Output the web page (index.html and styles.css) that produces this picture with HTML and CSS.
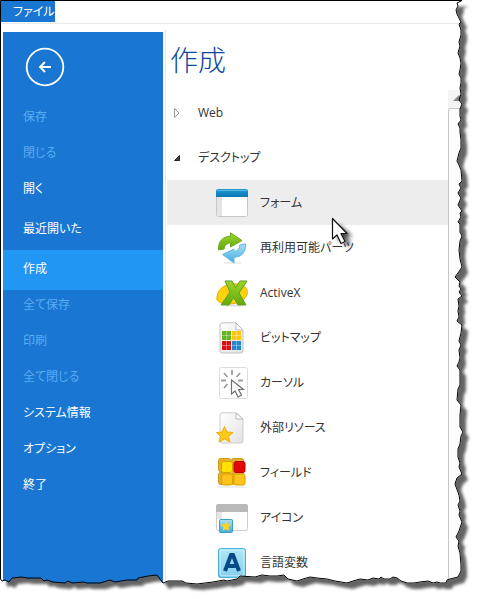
FILE: index.html
```html
<!DOCTYPE html>
<html lang="ja">
<head>
<meta charset="utf-8">
<meta name="viewport" content="width=device-width, initial-scale=1">
<title>作成</title>
<link rel="stylesheet" href="styles.css">
</head>
<body>
<div class="window">
  <header class="tabs"><button class="tab" type="button">ファイル</button></header>
  <div class="body">
    <nav class="side">
      <button class="back" type="button" aria-label="戻る">
        <svg viewBox="0 0 40 40" width="40" height="40"><circle cx="20" cy="20" r="18.3" fill="none" stroke="#fff" stroke-width="1.8"/><path d="M26 20H15M20 15l-5 5 5 5" fill="none" stroke="#fff" stroke-width="1.9"/></svg>
      </button>
      <button class="item" type="button" disabled>保存</button>
      <button class="item" type="button" disabled>閉じる</button>
      <button class="item tall" type="button">開く</button>
      <button class="item tall" type="button">最近開いた</button>
      <button class="item tall current" type="button">作成</button>
      <button class="item" type="button" disabled>全て保存</button>
      <button class="item" type="button" disabled>印刷</button>
      <button class="item" type="button" disabled>全て閉じる</button>
      <button class="item" type="button">システム情報</button>
      <button class="item" type="button">オプション</button>
      <button class="item" type="button">終了</button>
    </nav>
    <main class="main">
      <h1 class="title">作成</h1>
      <div class="pane">
        <div class="tree">
          <button class="row group" type="button"><svg width="12" height="12" viewBox="0 0 12 12"><path d="M2.500 1.500v9l4.500-4.500z" fill="#fff" stroke="#999"/></svg><span>Web</span></button>
          <button class="row group" type="button"><svg width="12" height="12" viewBox="0 0 12 12"><path d="M7.500 3.500v5h-5z" fill="#444" stroke="#222"/></svg><span>デスクトップ</span></button>
          <button class="row hover" type="button">
            <svg width="32" height="32" viewBox="0 0 32 32"><defs><linearGradient id="bar" x2="0" y2="1"><stop stop-color="#249bd0"/><stop offset="1" stop-color="#0876b5"/></linearGradient></defs><rect x=".5" y="2.500" width="31" height="27" rx="2" fill="#fff" stroke="#c7c7c7"/><path d="M1 10h5v19H2l-1-1z" fill="#e5e5e5"/><path d="M0 10V4q0-2 2-2h28q2 0 2 2v6z" fill="url(#bar)"/><path d="M1 3.500h30" stroke="#56bce4"/></svg><span>フォーム</span></button>
          <button class="row" type="button">
            <svg width="32" height="32" viewBox="0 0 32 32"><defs><linearGradient id="green" x2="0" y2="1"><stop stop-color="#9bd52c"/><stop offset="1" stop-color="#64a90c"/></linearGradient><linearGradient id="sky" x2="0" y2="1"><stop stop-color="#a8e1f5"/><stop offset="1" stop-color="#43ace0"/></linearGradient></defs><path d="M8 31h17" stroke="#eee" stroke-width="2"/><path d="M2.500 18C2 9 7 4.500 14.500 4.200V.8L26 8.500 14.500 15v-4C11 11 8.500 13 8.200 17z" fill="url(#green)" stroke="#6aaa20"/><path d="M29.500 12c.5 9-4.500 13-11.500 13.300V31L6.500 22.500 18 17v2.500c3.500-.3 5.600-2.500 5.800-6.500z" fill="url(#sky)" stroke="#65b9dd"/></svg><span>再利用可能パーツ</span></button>
          <button class="row" type="button">
            <svg width="32" height="32" viewBox="0 0 32 32"><path d="M10 28.500h15" stroke="#ddd" stroke-width="2"/><path d="M1 20C2 9 14 5 24 7.500c7 2 9 7 6 12C26 27 14 28 6 26 2 25 0 23 1 20z" fill="#ffd20c" stroke="#e8ad00"/><path d="M9 4h7l3.500 6.500L24 4h7l-8 12 7 12h-8l-4.500-7.500L13 28H5l9-13z" fill="url(#green)" stroke="#609e24"/></svg><span>ActiveX</span></button>
          <button class="row" type="button">
            <svg width="32" height="32" viewBox="0 0 32 32"><defs><linearGradient id="paper" x2="1" y2="1"><stop stop-color="#fff"/><stop offset="1" stop-color="#e2e2e2"/></linearGradient></defs><path d="M6 .8h14L27 8v21q0 2-2 2H6q-2 0-2-2V3q0-2 2-2z" fill="url(#paper)" stroke="#c1c1c1"/><path d="M20 1v7h7z" fill="#fff" stroke="#bbb"/><path d="M6 9h9v9H6z" fill="#65b51d"/><path d="M16 9h9v9h-9z" fill="#ffc50b"/><path d="M6 19h9v9H6z" fill="#db0f0f"/><path d="M16 19h9v9h-9z" fill="#2388c9"/><path d="M10.500 9v19M20.500 9v19M6 13.500h19M6 23.500h19" stroke="#fff" stroke-opacity=".35"/></svg><span>ビットマップ</span></button>
          <button class="row" type="button">
            <svg width="32" height="32" viewBox="0 0 32 32"><rect x="3.500" y=".5" width="28" height="31" rx="2" fill="#fff" stroke="#ddd"/><path d="M16 3v5M8 6l3.500 4M24 6l-3.500 4M5 13.500h5M22 13.500h5M8 21l3.500-4" stroke="#9d9d9d" stroke-width="1.800"/><path d="M15.500 13v14l3.500-3 3 6 3.500-2-3-5.500h5z" fill="#fff" stroke="#707070" stroke-width="1.200"/></svg><span>カーソル</span></button>
          <button class="row" type="button">
            <svg width="32" height="32" viewBox="0 0 32 32"><path d="M6 .8h14L27 7v22q0 2-2 2H6q-2 0-2-2V3q0-2 2-2z" fill="url(#paper)" stroke="#ccc"/><path d="M20 1v6h7z" fill="#fff" stroke="#bbb"/><path d="M8.500 14.500l2.500 5.500 6 .5-4.500 4 1.500 5.500-5.500-3L3 30l1.500-5.500-4-4 5.500-.5z" fill="#ffc81d" stroke="#edb000"/></svg><span>外部リソース</span></button>
          <button class="row" type="button">
            <svg width="32" height="32" viewBox="0 0 32 32"><path d="M1 30h28" stroke="#eee" stroke-width="2"/><g fill="#e6b02a" stroke="#cf9a1a"><rect x="2.500" y="1.500" width="12" height="13" rx="2"/><rect x="15.500" y="1.500" width="12" height="13" rx="2"/><rect x="2.500" y="15.500" width="12" height="12" rx="2"/><rect x="15.500" y="15.500" width="12" height="12" rx="2"/></g><g stroke="#df9e00"><rect x="5.500" y="4.500" width="11" height="11" rx="2" fill="#ffe000"/><rect x="5.500" y="17" width="11" height="11" rx="2" fill="#ffc31b"/><rect x="18" y="17" width="11" height="11" rx="2" fill="#ffc31b"/></g><rect x="18" y="4.500" width="11" height="11" rx="2" fill="#e20808" stroke="#b80000"/></svg><span>フィールド</span></button>
          <button class="row" type="button">
            <svg width="32" height="32" viewBox="0 0 32 32"><rect x=".5" y="2.500" width="31" height="26" rx="2" fill="#fff" stroke="#ccc"/><path d="M0 10V4q0-2 2-2h28q2 0 2 2v6z" fill="#b9b9b9"/><path d="M1 10h5v7H1z" fill="#e5e5e5"/><rect x="3.500" y="17.500" width="13" height="13" rx="1" fill="url(#sky)" stroke="#3a9fc4"/><path d="M10 19l1.500 3.200 4 .4-3 2.600.8 3.800-3.300-2-3.300 2 .8-3.800-3-2.600 4-.4z" fill="#ffd322"/></svg><span>アイコン</span></button>
          <button class="row" type="button">
            <svg width="32" height="32" viewBox="0 0 32 32"><rect x="2.500" y="1.500" width="27" height="29" rx="2" fill="url(#sky)" stroke="#42b4d7"/><rect x="4" y="3" width="24" height="26" rx="1" fill="#b6e8f6" fill-opacity=".6" stroke="#d2f3fb"/><path d="M9 24l6-16h2l6 16M11.500 19h9" fill="none" stroke="#064b86" stroke-width="4"/></svg><span>言語変数</span></button>
        </div>
        <div class="scroll">
          <div class="up"><svg width="12" height="8" viewBox="0 0 12 8"><path d="M0 6l6-6 6 6z" fill="#888"/></svg></div>
          <div class="thumb"></div>
        </div>
      </div>
    </main>
  </div>
  <svg class="cursor" width="34" height="38" viewBox="0 0 34 38"><defs><filter id="soft" x="-40%" y="-40%" width="180%" height="180%"><feGaussianBlur stdDeviation="2"/></filter></defs><path d="M2.500 3v18l4-4 4 8 4-2-4-7.500h6z" transform="translate(6 5)" fill="#000" fill-opacity=".75" filter="url(#soft)"/><path d="M2.500 2.500v20.500l4.500-4 4 8.500 4-2-4-8h6z" fill="#fff" stroke="#111" stroke-width="1.200" stroke-linejoin="round"/></svg>
  <svg class="edge" viewBox="0 0 479 599" preserveAspectRatio="none" aria-hidden="true">
    <defs>
      <path id="sheet" d="M.5 .5H462L457 3 458 6 456 10 457 14 459 18 461 22 459 24 461 30 461 35 459 42 460 46 458 53 460 58 461 63 460 70 459 74 461 78 461 83 460 88 461 94 459 100 462 104 460 109 460 116 461 120 458 124 460 128 460 132 461 140 461 148 459 153 457 161 459 165 461 170 462 181 459 184 461 188 458 193 461 198 458 205 462 211 460 213 461 217 458 222 460 224 460 232 462 236 460 241 459 250 460 259 462 267 458 273 455 277 460 282 459 286 461 289 459 292 462 296 458 299 459 306 458 311 459 317 457 321 462 325 461 333 459 341 461 345 459 350 460 358 459 362 457 366 460 370 460 385 458 389 457 400 461 405 460 415 460 427 463 432 461 436 460 444 458 449 458 457 460 463 459 467 462 474 457 478 455 484 459 495 460 501 458 505 460 511 459 515 462 522 459 531 456 537 459 541 458 546 460 553 461 565 461 571 458 577 450 579 447 580 446 583 440 583 437 582 433 583 428 581 420 582 414 583 407 583 401 581 397 578 393 577 390 579 384 579 381 577 379 579 373 578 368 580 360 579 353 581 347 583 335 581 327 579 317 578 310 577 303 579 297 581 288 579 284 575 277 576 270 576 262 575 255 577 240 576 237 579 227 581 224 580 213 582 197 584 186 583 182 581 168 581 163 583 157 575 148 576 138 578 137 580 127 580 115 582 110 580 100 583 87 583 83 582 72 583 68 581 65 583 53 582 47 580 44 581 41 578 27 578 22 577 12 578 9 582 5 580 2 581 .5 579Z"/>
      <mask id="outside" maskUnits="userSpaceOnUse" x="0" y="0" width="479" height="599"><path d="M0 0H479V599H0Z" fill="#fff"/><use href="#sheet" fill="#000" stroke="#000"/></mask>
      <filter id="shade" x="-5%" y="-5%" width="110%" height="110%"><feGaussianBlur stdDeviation="1.500"/></filter>
    </defs>
    <g mask="url(#outside)"><path d="M0 0H479V599H0Z" fill="#fff"/><g filter="url(#shade)"><use href="#sheet" x="6" y="6" fill="#646464"/></g></g>
    <use href="#sheet" fill="none" stroke="#000"/>
  </svg>
</div>
</body>
</html>
```
FILE: styles.css
```css
* { box-sizing: border-box; }
body {
  margin: 0;
  background: #fff;
  color: #333;
  font: 12px/20px "Open Sans", "Noto Sans CJK JP", sans-serif;
  font-feature-settings: "palt";
}
button {
  margin: 0;
  padding: 0;
  border: 0;
  background: none;
  color: inherit;
  font: inherit;
  font-feature-settings: inherit;
  text-align: left;
}
svg { display: block; flex: none; }
.window {
  position: relative;
  display: flex;
  flex-direction: column;
  height: 100vh;
  min-height: 400px;
  overflow: hidden;
  padding: 1px 0 0 1px;
}
.tabs {
  flex: none;
  height: 23px;
  border-bottom: 1px solid #e9e9e9;
}
.tab {
  display: block;
  height: 21px;
  padding-left: 12px;
  background: #1976d2;
  color: #fff;
}
.body {
  flex: 1;
  display: flex;
  min-height: 0;
  padding-top: 6px;
}
.side {
  flex: none;
  display: flex;
  flex-direction: column;
  width: 160px;
  margin: 2px 2px 0;
  background: #1976d2;
  color: #fff;
}
.back { margin: 15px 0 11px 22px; width: 40px; }
.item {
  flex: none;
  display: flex;
  align-items: center;
  height: 36px;
  padding: 2px 20px 0;
}
.item:disabled { color: #58adf3; }
.tall { height: 40px; padding-bottom: 4px; }
.current { background: #2196f3; }
.current + .item { height: 32px; padding-bottom: 4px; }
.main {
  flex: 1;
  display: flex;
  flex-direction: column;
  min-width: 0;
  border-left: 1px solid #e9e9e9;
}
.title {
  flex: none;
  margin: 0;
  padding: 8px 4px;
  color: #0d47a1;
  font-size: 28px;
  font-weight: 300;
  line-height: 44px;
}
.pane { flex: 1; display: flex; min-height: 0; }
.tree {
  flex: 1;
  display: flex;
  flex-direction: column;
  min-width: 0;
  overflow: hidden;
  padding-left: 1px;
}
.row {
  flex: none;
  display: flex;
  align-items: center;
  gap: 12px;
  height: 45px;
  padding-left: 49px;
}
.group { gap: 14px; padding-left: 5px; }
.hover { background: #ededed; }
.scroll {
  flex: none;
  display: flex;
  flex-direction: column;
  width: 31px;
  background: #f4f4f4;
}
.up { height: 18px; padding: 5px; }
.thumb {
  flex: 1;
  border: 1px solid #c6c6c6;
  border-top-left-radius: 2px;
  background: #fcfcfc;
}
.cursor { position: absolute; left: 330px; top: 216px; }
.edge { position: absolute; left: 0; top: 0; width: 100%; height: 100%; pointer-events: none; }
```
